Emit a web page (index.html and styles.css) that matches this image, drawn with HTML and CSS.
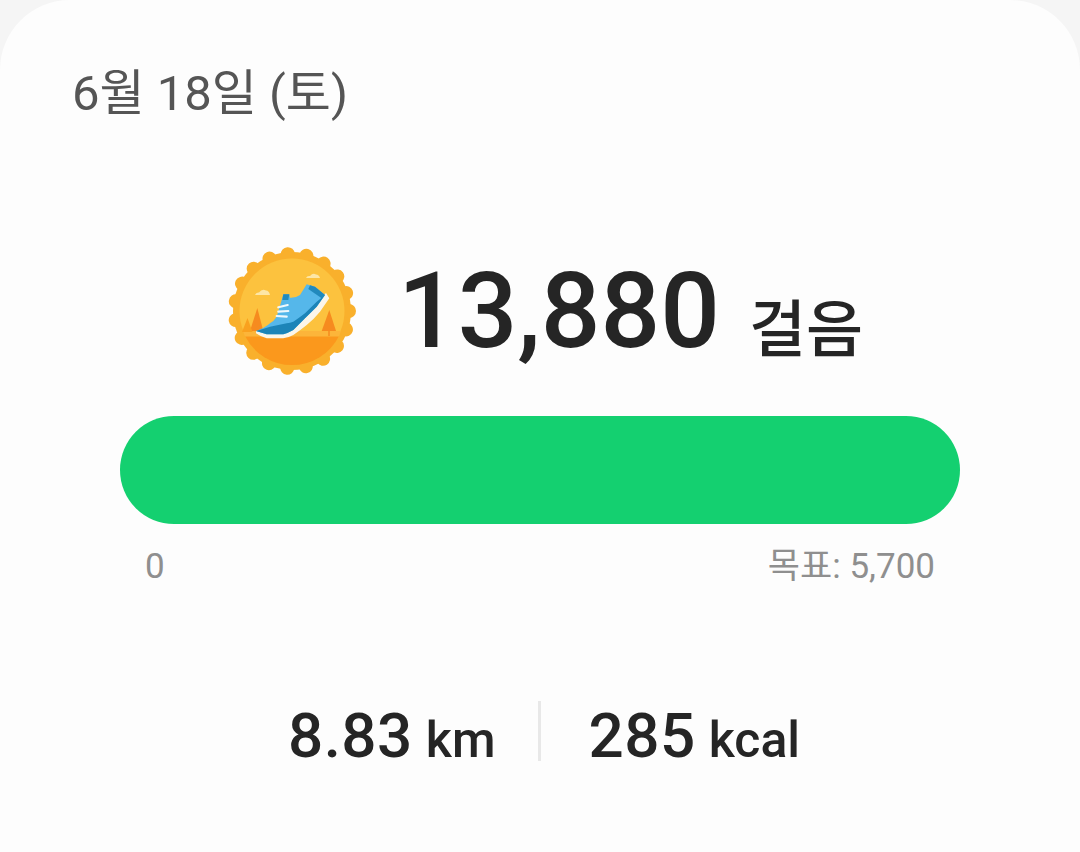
FILE: index.html
```html
<!DOCTYPE html>
<html lang="ko">
<head>
  <meta charset="UTF-8" />
  <meta name="viewport" content="width=device-width, initial-scale=1.0" />
  <title>걸음</title>
  <link rel="stylesheet" href="styles.css">
</head>
<body>
  <div class="card">
    <div class="date">6월 18일 (토)</div>

    <div class="steps">
      <svg class="badge" viewBox="0 0 130 130" width="130" height="130" aria-hidden="true">
        <circle cx="65" cy="65" r="59" fill="#f9b02c"/>
        <circle cx="65" cy="65" r="57" fill="none" stroke="#f9b02c" stroke-width="14" stroke-linecap="round" stroke-dasharray="0.01 18.84"/>
        <circle cx="65" cy="65" r="52.500" fill="#fcc23e"/>
        <path d="M18 90 H112 A52.500 52.500 0 0 1 18 90Z" fill="#fb981c"/>
        <path d="M16 85 H114 L112 90.500 H18Z" fill="#fcb53a"/>
        <path d="M23 85 L30.300 62 L36.300 85Z" fill="#f68b1f"/>
        <path d="M15 86 L20.500 72 L25.500 86Z" fill="#f9a11f"/>
        <path d="M94.700 85 L102.300 64 L109 85Z" fill="#f68b1f"/>
        <path d="M102 85 V90" stroke="#f68b1f" stroke-width="1.500"/>
        <path d="M28 49 q1 -3 4 -2.500 q3 -4 7 -2 q3 0 4 4.500Z" fill="#fde6a6"/>
        <path d="M79 32 q1 -2.500 4 -2 q3 -3.500 6 -1.500 q3 0 4 3.500Z" fill="#fde6a6"/>
        <!-- shoe -->
        <path d="M29 85 L29 87.300 Q34 91 39.700 92.300 L56.300 92.300 Q62 91.500 66.300 89 Q73 84.500 79.700 79 Q87 73 93 65.700 L102.300 52.300 L99 47 L80 65 L60 84Z" fill="#fbf6ea"/>
        <path d="M29 85 Q38 82 43 77.300 Q47 75 49.700 70.700 L54.700 54 L56.300 48.300 H62.300 L63 51.700 Q69 52 73 49 L79.700 38.300 L88 40.700 L98 49 L89.700 60.700 L78 72.300 L66.300 84 Q61 87 56.300 88.300 H39.700Z" fill="#55b7ea"/>
        <path d="M29 85 Q36 83 43 80.700 L59.700 77.300 Q63 77 66.300 75.700 Q72 72 78 67.300 L89.700 55.700 L98 49 L89.700 60.700 L78 72.300 L66.300 84 Q61 87 56.300 88.300 H39.700Z" fill="#1c84b8"/>
        <path d="M83 39.300 L88 40.700 L98 49 L94.700 52.300 L81.300 43Z" fill="#2189bd"/>
        <path d="M56.300 48.300 H62.300 L61.300 54 H55.300Z" fill="#2189bd"/>
        <path d="M51.300 61.300 L60.700 59 M51.300 65.700 L61.300 65 M49.700 70 L59.700 70.700" stroke="#eef8fc" stroke-width="2.200" stroke-linecap="round" fill="none"/>
      </svg>
      <span class="steps-count">13,880</span>
      <span class="steps-unit">걸음</span>
    </div>

    <div class="bar"></div>
    <div class="bar-labels">
      <span>0</span>
      <span>목표: 5,700</span>
    </div>

    <div class="stats">
      <div class="stat"><span class="stat-value">8.83</span><span class="stat-unit">km</span></div>
      <div class="divider"></div>
      <div class="stat"><span class="stat-value">285</span><span class="stat-unit">kcal</span></div>
    </div>
  </div>
</body>
</html>
```

FILE: styles.css
```css
html, body {
  margin: 0;
  height: 100%;
}
body {
  font-family: Roboto, "Noto Sans CJK KR", sans-serif;
  background-color: #f5f5f5;
  overflow: hidden;
}
.card {
  background-color: #fdfdfd;
  border-radius: 70px 70px 0 0;
  height: 852px;
  box-sizing: border-box;
  padding: 62px 120px 0;
}
.date {
  font-size: 49px;
  line-height: 64px;
  color: #555555;
  margin-left: -48px;
}
.steps {
  display: flex;
  align-items: center;
  height: 130px;
  margin-top: 120px;
  padding-left: 107px;
}
.badge {
  flex: none;
}
.steps-count {
  font-size: 105px;
  font-weight: 500;
  color: #252525;
  margin-left: 41px;
}
.steps-unit {
  font-size: 62px;
  font-weight: 500;
  color: #252525;
  margin-left: 29px;
  margin-top: 28px;
}
.bar {
  height: 108px;
  margin-top: 40px;
  border-radius: 54px;
  background-color: #14d070;
}
.bar-labels {
  display: flex;
  justify-content: space-between;
  padding: 0 25px;
  margin-top: 22px;
  font-size: 35px;
  line-height: 42px;
  color: #8f8f8f;
}
.stats {
  display: flex;
  align-items: center;
  justify-content: center;
  margin-top: 113px;
  height: 60px;
  padding-left: 8px;
}
.stat {
  display: flex;
  align-items: baseline;
  gap: 13px;
  margin-top: 8px;
  color: #252525;
  font-weight: 500;
  white-space: nowrap;
}
.stat-value {
  font-size: 62px;
  letter-spacing: 0.5px;
}
.stat-unit {
  font-size: 50px;
}
.divider {
  width: 3px;
  height: 60px;
  background-color: #e8e8e8;
  margin: 0 47px 0 43px;
}
```
